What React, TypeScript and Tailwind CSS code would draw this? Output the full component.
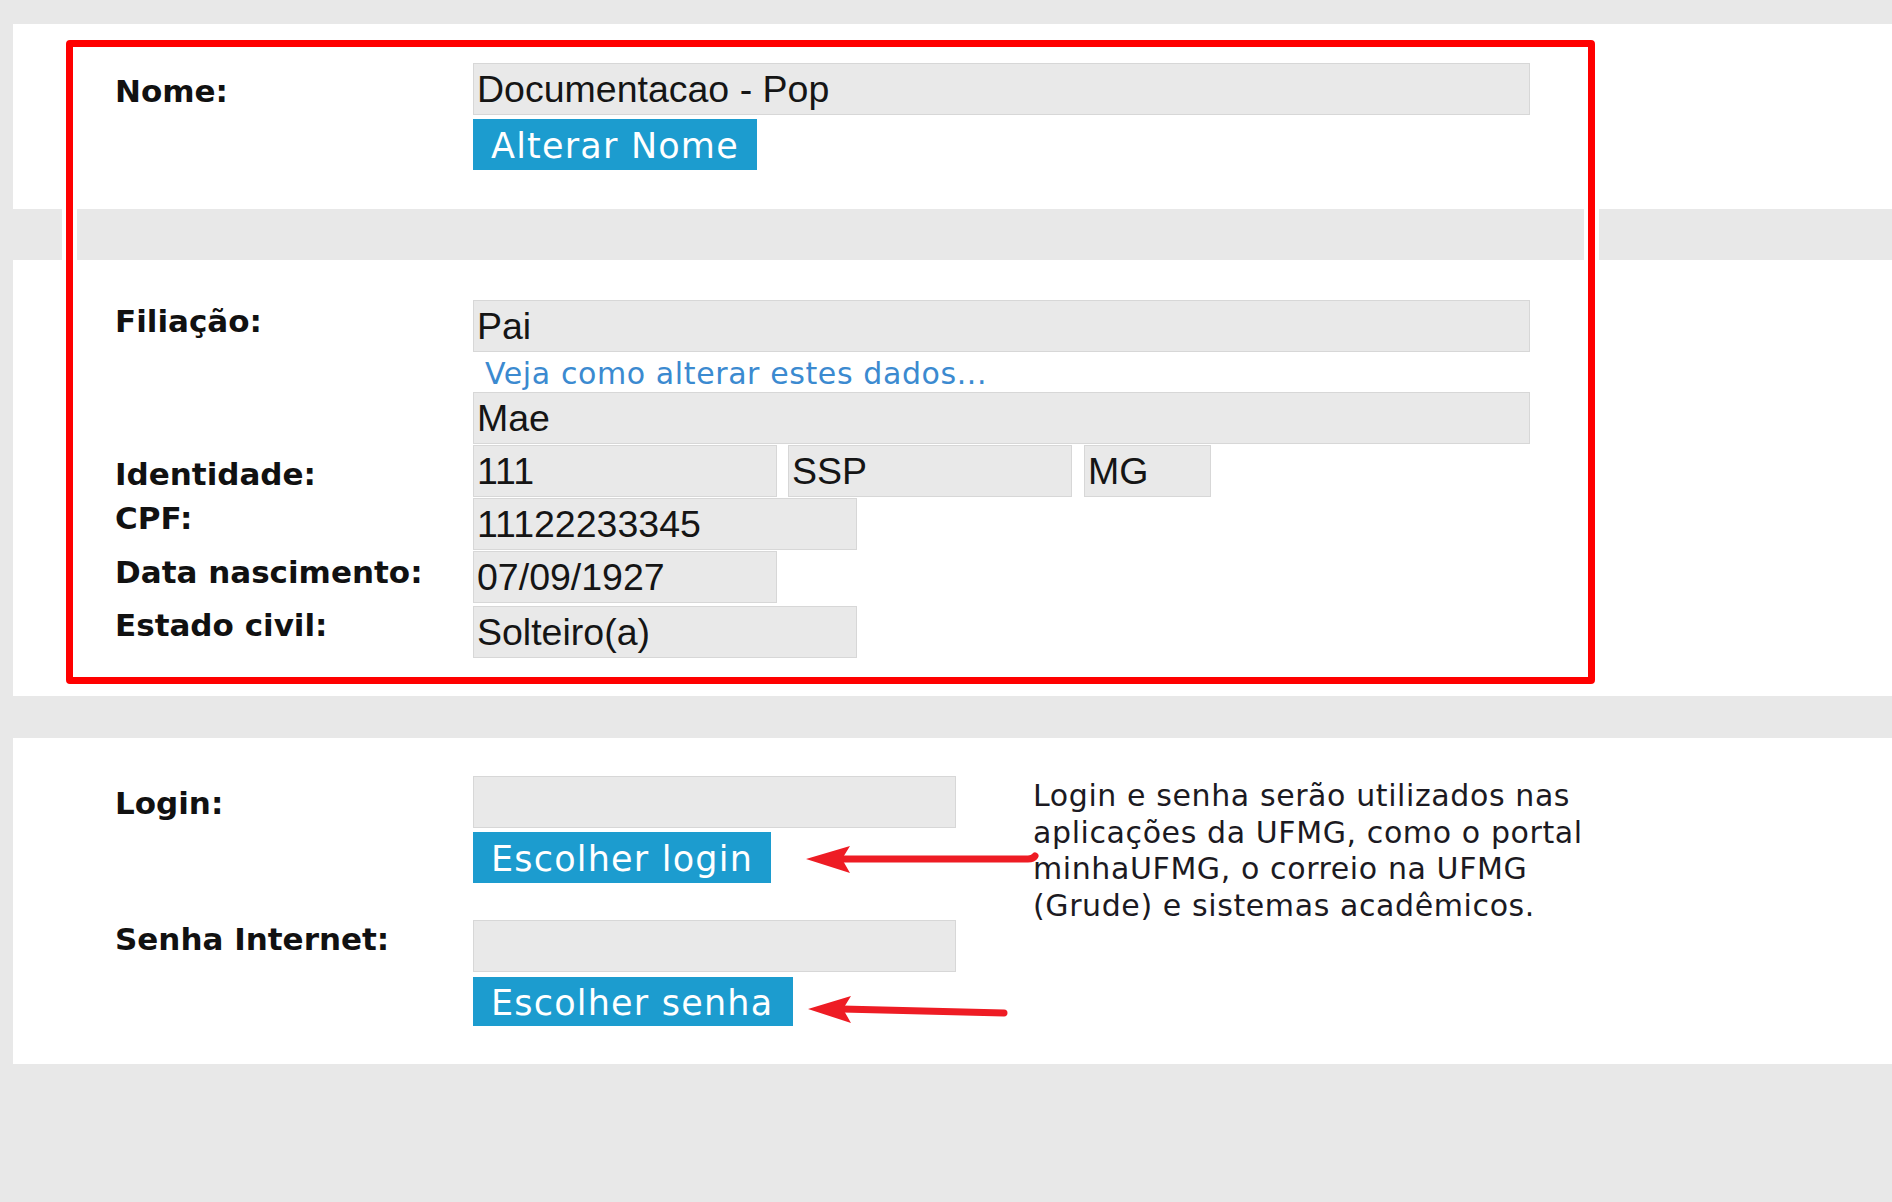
import React from "react";

const label =
  "w-[358px] shrink-0 font-['DejaVu_Sans','Verdana',sans-serif] font-bold text-[31px] leading-[36px] text-[#111111]";
const field =
  "h-[52px] bg-[#e9e9e9] border border-[#d7d7d7] pl-[3px] font-['Liberation_Sans','Arial',sans-serif] text-[37.5px] leading-[51px] text-[#151515] whitespace-nowrap overflow-hidden";
const btn =
  "inline-block bg-[#1c9ccf] text-white font-['DejaVu_Sans','Verdana',sans-serif] text-[35px] tracking-[1.2px] whitespace-nowrap px-[18px] pt-[3px]";
const verd = "font-['DejaVu_Sans','Verdana',sans-serif] text-[30px] tracking-[0.6px]";

function Field({ w, value }: { w: string; value?: string }) {
  return <div className={`${field} ${w}`}>{value}</div>;
}

export default function App() {
  return (
    <div className="relative w-[1892px] h-[1202px] overflow-hidden bg-[#e8e8e8] pt-[24px] pl-[13px]">
      {/* Panel 1 */}
      <div className="bg-white h-[185px] pt-[39px] pl-[102px]">
        <div className="flex items-start">
          <div className={`${label} mt-[10px]`}>Nome:</div>
          <div className="flex flex-col items-start">
            <Field w="w-[1057px]" value="Documentacao - Pop" />
            <div className={`${btn} mt-[4px] h-[51px] leading-[48px]`}>Alterar Nome</div>
          </div>
        </div>
      </div>

      {/* Panel 2 */}
      <div className="bg-white h-[436px] mt-[51px] pt-[40px] pl-[102px]">
        <div className="flex items-start">
          <div className={`${label} mt-[3px]`}>Filiação:</div>
          <div className="flex flex-col items-start">
            <Field w="w-[1057px]" value="Pai" />
            <div className={`${verd} h-[40px] leading-[40px] pt-[2px] pl-[12px] text-[#3b8ad0]`}>
              Veja como alterar estes dados...
            </div>
            <Field w="w-[1057px]" value="Mae" />
          </div>
        </div>
        <div className="flex items-start mt-[1px]">
          <div className={`${label} mt-[11px]`}>Identidade:</div>
          <div className="flex gap-[11px]">
            <Field w="w-[304px]" value="111" />
            <Field w="w-[284px]" value="SSP" />
            <Field w="w-[127px] ml-[1px]" value="MG" />
          </div>
        </div>
        <div className="flex items-start mt-[1px]">
          <div className={`${label} mt-[2px]`}>CPF:</div>
          <Field w="w-[384px]" value="11122233345" />
        </div>
        <div className="flex items-start mt-[1px]">
          <div className={`${label} mt-[3px]`}>Data nascimento:</div>
          <Field w="w-[304px]" value="07/09/1927" />
        </div>
        <div className="flex items-start mt-[3px]">
          <div className={`${label} mt-[1px]`}>Estado civil:</div>
          <Field w="w-[384px]" value="Solteiro(a)" />
        </div>
      </div>

      {/* Panel 3 */}
      <div className="bg-white h-[326px] mt-[42px] pt-[38px] pl-[102px] flex items-start">
        <div className="flex flex-col w-[841px] shrink-0">
          <div className="flex items-start">
            <div className={`${label} mt-[9px]`}>Login:</div>
            <div className="flex flex-col items-start">
              <Field w="w-[483px]" />
              <div className={`${btn} mt-[4px] h-[51px] leading-[48px]`}>Escolher login</div>
            </div>
          </div>
          <div className="flex items-start mt-[37px]">
            <div className={`${label} mt-[1px]`}>Senha Internet:</div>
            <div className="flex flex-col items-start">
              <Field w="w-[483px]" />
              <div className={`${btn} mt-[5px] h-[49px] leading-[46px] pr-[20px]`}>Escolher senha</div>
            </div>
          </div>
        </div>
        <div className={`${verd} ml-[77px] mt-[2px] leading-[36.5px] text-[#1c1a22] whitespace-nowrap`}>
          Login e senha serão utilizados nas
          <br />
          aplicações da UFMG, como o portal
          <br />
          minhaUFMG, o correio na UFMG
          <br />
          (Grude) e sistemas acadêmicos.
        </div>
      </div>

      {/* Red annotation box */}
      <div className="pointer-events-none absolute left-[66px] top-[40px] w-[1529px] h-[644px] border-[7px] border-[#ff0000] rounded-[4px] shadow-[0_0_0_4px_#ffffff,inset_0_0_0_4px_#ffffff]" />

      {/* Red annotation arrows */}
      <svg
        className="pointer-events-none absolute left-0 top-0"
        width="1892"
        height="1202"
        viewBox="0 0 1892 1202"
      >
        <path d="M842 859 L1028 859 Q1033 859 1035 856" stroke="#ee1c24" strokeWidth="7" fill="none" strokeLinecap="round" />
        <polygon points="806,859 850,846 842,859 850,873" fill="#ee1c24" />
        <path d="M842 1009 L1004 1013" stroke="#ee1c24" strokeWidth="7" fill="none" strokeLinecap="round" />
        <polygon points="808,1009 851,996 843,1009 851,1023" fill="#ee1c24" />
      </svg>
    </div>
  );
}
